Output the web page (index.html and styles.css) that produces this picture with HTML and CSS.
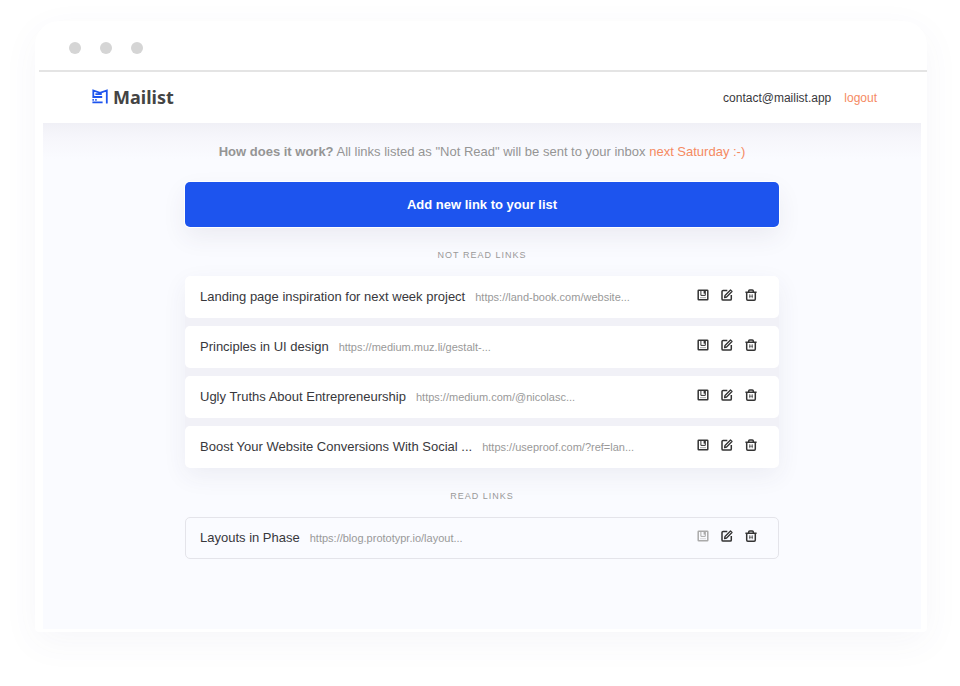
FILE: index.html
```html
<!DOCTYPE html>
<html lang="en">
<head>
<meta charset="utf-8">
<meta name="viewport" content="width=device-width, initial-scale=1">
<title>Mailist</title>
<link rel="stylesheet" href="styles.css">
</head>
<body>
<svg class="sprite" aria-hidden="true">
  <symbol id="save" viewBox="0 0 12 12">
    <rect x="1.2" y="1.2" width="9.6" height="9.6" rx="0.6" fill="none" stroke="currentColor" stroke-width="1.5"/>
    <path d="M3.9 1.5v4.9h4.4V1.5" fill="none" stroke="currentColor" stroke-width="1"/>
    <path d="M6.6 2h1.6v2.6H6.6z" fill="currentColor"/>
    <path d="M3 8.7h6" fill="none" stroke="currentColor" stroke-width="0.7" opacity="0.6"/>
  </symbol>
  <symbol id="edit" viewBox="0 0 12 12">
    <path d="M6.3 1.5H2.1Q1 1.5 1 2.6v7.3Q1 11 2.1 11h7.1q1.1 0 1.1-1.1V6" fill="none" stroke="currentColor" stroke-width="1.5"/>
    <path d="M3.6 8.5l.4-2L9.5 1 11 2.5 5.6 8z" fill="none" stroke="currentColor" stroke-width="1.3" stroke-linejoin="round"/>
  </symbol>
  <symbol id="trash" viewBox="0 0 12 12">
    <path d="M.4 3.2h11.2M3.7 3V1.9Q3.7.9 4.7.9h2.6q1 0 1 1V3M1.7 3.2v6.9q0 1.1 1.1 1.1h6.4q1.1 0 1.1-1.1V3.2" fill="none" stroke="currentColor" stroke-width="1.5"/>
    <path d="M4.8 5.2v4M7.2 5.2v4M4 7.2h4" fill="none" stroke="currentColor" stroke-width="1" opacity="0.7"/>
  </symbol>
</svg>
<div class="window">
  <div class="titlebar"><span class="dot"></span><span class="dot"></span><span class="dot"></span></div>
  <header class="header">
    <a class="logo" href="#">
      <svg class="logo-mark" viewBox="0 0 16 15" aria-hidden="true"><path d="M10.2 8H1.3V1.5L8 3.9l6.8-2.4v12.9M3.4 5.2h6.4M.4 10.8h1.5M3.2 10.8h1.5M.4 13.4h10.2" fill="none" stroke="currentColor" stroke-width="1.8"/></svg>
      <span>Mailist</span>
    </a>
    <nav class="account"><span>contact@mailist.app</span><a class="accent" href="#">logout</a></nav>
  </header>
  <main class="content">
    <div class="column">
      <p class="intro"><strong>How does it work?</strong> All links listed as "Not Read" will be sent to your inbox <span class="accent">next Saturday :-)</span></p>
      <button class="add" type="button">Add new link to your list</button>
      <h2 class="label">Not read links</h2>
      <ul class="list unread">
        <li class="row"><span class="title">Landing page inspiration for next week project</span><a class="url" href="#">https://land-book.com/website...</a>
          <span class="actions"><button type="button" aria-label="Mark as read"><svg><use href="#save"/></svg></button><button type="button" aria-label="Edit"><svg><use href="#edit"/></svg></button><button type="button" aria-label="Delete"><svg><use href="#trash"/></svg></button></span></li>
        <li class="row"><span class="title">Principles in UI design</span><a class="url" href="#">https://medium.muz.li/gestalt-...</a>
          <span class="actions"><button type="button" aria-label="Mark as read"><svg><use href="#save"/></svg></button><button type="button" aria-label="Edit"><svg><use href="#edit"/></svg></button><button type="button" aria-label="Delete"><svg><use href="#trash"/></svg></button></span></li>
        <li class="row"><span class="title">Ugly Truths About Entrepreneurship</span><a class="url" href="#">https://medium.com/@nicolasc...</a>
          <span class="actions"><button type="button" aria-label="Mark as read"><svg><use href="#save"/></svg></button><button type="button" aria-label="Edit"><svg><use href="#edit"/></svg></button><button type="button" aria-label="Delete"><svg><use href="#trash"/></svg></button></span></li>
        <li class="row"><span class="title">Boost Your Website Conversions With Social ...</span><a class="url" href="#">https://useproof.com/?ref=lan...</a>
          <span class="actions"><button type="button" aria-label="Mark as read"><svg><use href="#save"/></svg></button><button type="button" aria-label="Edit"><svg><use href="#edit"/></svg></button><button type="button" aria-label="Delete"><svg><use href="#trash"/></svg></button></span></li>
      </ul>
      <h2 class="label">Read links</h2>
      <ul class="list read">
        <li class="row"><span class="title">Layouts in Phase</span><a class="url" href="#">https://blog.prototypr.io/layout...</a>
          <span class="actions"><button class="muted" type="button" aria-label="Mark as not read"><svg><use href="#save"/></svg></button><button type="button" aria-label="Edit"><svg><use href="#edit"/></svg></button><button type="button" aria-label="Delete"><svg><use href="#trash"/></svg></button></span></li>
      </ul>
    </div>
  </main>
</div>
</body>
</html>
```
FILE: styles.css
```css
* { box-sizing: border-box; }
body {
  margin: 0;
  padding: 21px 33px 54px 35px;
  background: #fff;
  color: #38383c;
  font: 13px/20px "Liberation Sans", Arial, sans-serif;
}
a { color: inherit; text-decoration: none; }
button { font: inherit; border: 0; cursor: pointer; }
.sprite { position: absolute; width: 0; height: 0; }
.window {
  padding-bottom: 3px;
  border-radius: 24px 24px 4px 4px;
  background: #fff;
  box-shadow: 0 10px 36px rgba(70, 80, 130, 0.05);
}
.titlebar {
  display: flex;
  align-items: center;
  gap: 19px;
  height: 51px;
  margin-left: 4px;
  padding: 4px 30px 0;
  border-bottom: 2px solid #e4e4e4;
}
.dot { width: 12px; height: 12px; border-radius: 50%; background: #d5d5d5; }
.header {
  display: flex;
  align-items: center;
  justify-content: space-between;
  height: 51px;
  padding: 0 50px 0 57px;
}
.logo {
  display: flex;
  align-items: center;
  gap: 5px;
  padding-bottom: 2px;
  color: #444;
  font: bold 18px/24px "Noto Sans", sans-serif;
}
.logo-mark { width: 16px; height: 15px; color: #1d54ee; }
.account { display: flex; gap: 13px; font-size: 12px; }
.accent { color: #f58a62; }
.content {
  min-height: 505px;
  margin: 0 6px 0 8px;
  padding: 19px 20px 70px;
  background: linear-gradient(#f0f0f6, #f6f6fb 14px, #fafbff 36px);
}
.column { max-width: 594px; margin: 0 auto; }
.intro { margin: 0 0 20px; color: #959595; text-align: center; }
.add {
  display: block;
  width: 100%;
  height: 45px;
  border-radius: 5px;
  background: #1d54ee;
  color: #fff;
  font-weight: bold;
  box-shadow: 0 0 0 1px #fff, 0 10px 24px rgba(60, 50, 90, 0.08);
}
.label {
  margin: 20px 0 13px;
  color: #999;
  font-size: 9px;
  font-weight: normal;
  line-height: 16px;
  letter-spacing: 1px;
  text-align: center;
  text-transform: uppercase;
}
.list { display: grid; gap: 8px; margin: 0; padding: 0; list-style: none; }
.unread { border-radius: 5px; box-shadow: 0 8px 24px rgba(60, 50, 100, 0.07); background: #f1f1f7; }
.row {
  display: flex;
  align-items: center;
  min-height: 42px;
  padding: 0 22px 0 15px;
  border-radius: 5px;
  background: #fff;
}
.read .row { border: 1px solid #e4e4ea; background: #fafbff; padding: 0 21px 0 14px; }
.title { margin-right: 10px; }
.url { color: #999; font-size: 11px; }
.actions { display: flex; gap: 12px; margin-left: auto; padding-bottom: 4px; }
.actions button { padding: 0; background: none; color: #333; line-height: 0; }
.actions .muted { color: #aaa; }
.actions svg { display: block; width: 12px; height: 12px; }
```
